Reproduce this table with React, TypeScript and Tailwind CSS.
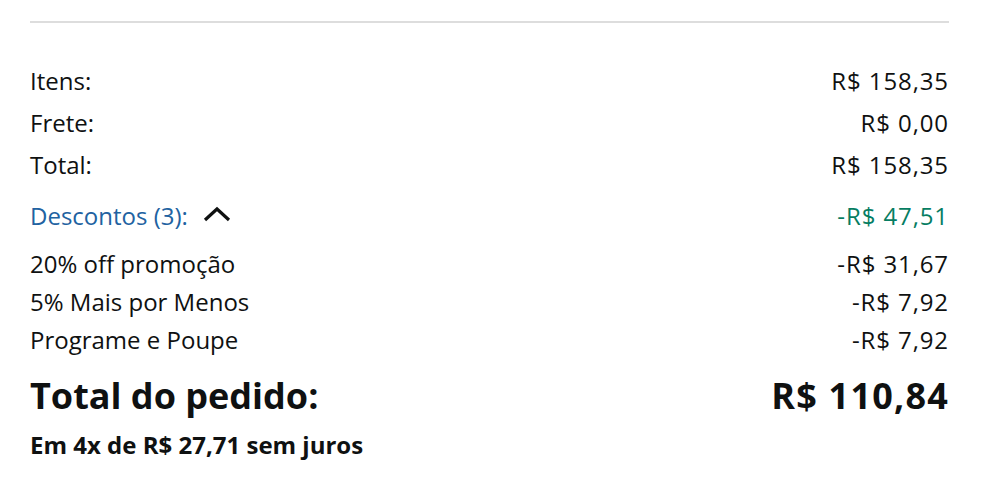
import React from "react";

const Row = ({ label, value, h }: { label: React.ReactNode; value: string; h: string }) => (
  <div className={`flex items-center justify-between ${h}`}>
    <div>{label}</div>
    <div className="tracking-[0.9px]">{value}</div>
  </div>
);

export default function App() {
  return (
    <div
      className="w-[992px] h-[500px] bg-white text-[#0f1111] pl-[30px] pr-[43px] pt-[21px]"
      style={{ fontFamily: '"Open Sans", "Noto Sans", sans-serif' }}
    >
      <div className="border-t-2 border-[#dddddd]" />
      <div className="mt-[37px] text-[24px] leading-none">
        <Row label="Itens:" value="R$ 158,35" h="h-[42px]" />
        <Row label="Frete:" value="R$ 0,00" h="h-[42px]" />
        <Row label="Total:" value="R$ 158,35" h="h-[42px]" />
        <div className="flex items-center justify-between h-[59px]">
          <div className="flex items-center">
            <span className="text-[#2162a1]">Descontos (3):</span>
            <svg width="28" height="16" viewBox="0 0 28 16" className="ml-[15px] -mt-[4px]">
              <path d="M2 14 L14 3 L26 14" fill="none" stroke="#0f1111" strokeWidth="3.2" />
            </svg>
          </div>
          <div className="text-[#067d62] tracking-[0.9px]">-R$ 47,51</div>
        </div>
        <Row label="20% off promoção" value="-R$ 31,67" h="h-[38px]" />
        <Row label="5% Mais por Menos" value="-R$ 7,92" h="h-[38px]" />
        <Row label="Programe e Poupe" value="-R$ 7,92" h="h-[38px]" />
        <div className="flex items-center justify-between h-[74px] font-bold text-[36px]">
          <div>Total do pedido:</div>
          <div className="tracking-[1.2px]">R$ 110,84</div>
        </div>
        <div className="flex items-center h-[24px] font-bold text-[24px]">Em 4x de R$ 27,71 sem juros</div>
      </div>
    </div>
  );
}
